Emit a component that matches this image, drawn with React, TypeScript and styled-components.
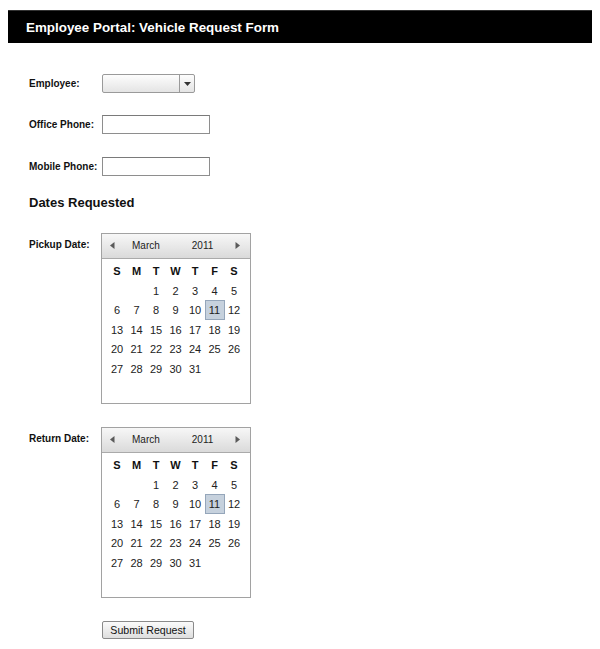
import React from "react";
import styled, { createGlobalStyle } from "styled-components";

const GlobalStyle = createGlobalStyle`
  html, body { background: #fff; }
  body {
    margin: 10px 8px 0 8px;
    font-family: "Liberation Sans", Arial, sans-serif;
    color: #111;
  }
`;

const TitleBar = styled.div`
  height: 33px;
  background: #000;
  border-top: 1px solid #333;
  box-sizing: border-box;
  color: #fff;
  font-weight: bold;
  font-size: 13.4px;
  display: flex;
  align-items: center;
  padding-left: 18px;
`;

const Form = styled.div`
  padding-left: 21px;
  display: flex;
  flex-direction: column;
`;

const Row = styled.div<{ $mt: number; $top?: boolean }>`
  display: grid;
  grid-template-columns: 73px auto;
  align-items: ${(p) => (p.$top ? "start" : "center")};
  margin-top: ${(p) => p.$mt}px;
`;

const Label = styled.div<{ $pt?: number }>`
  font-size: 10px;
  font-weight: bold;
  line-height: 12px;
  color: #111;
  padding-top: ${(p) => p.$pt ?? 0}px;
`;

const Combo = styled.div`
  width: 93px;
  height: 19px;
  box-sizing: border-box;
  border: 1px solid #9a9a9a;
  border-radius: 2px;
  background: linear-gradient(#fdfdfd, #e4e4e4);
  display: flex;
  justify-content: flex-end;
`;

const ComboButton = styled.div`
  width: 14px;
  border-left: 1px solid #9a9a9a;
  display: flex;
  align-items: center;
  justify-content: center;
`;

const TextInput = styled.input`
  width: 108px;
  height: 19px;
  box-sizing: border-box;
  border: 1px solid #8e8e8e;
  border-top-color: #7a7a7a;
  background: #fff;
  margin: 0;
  padding: 0 3px;
  font-family: inherit;
`;

const SectionTitle = styled.div`
  font-size: 13px;
  font-weight: bold;
  line-height: 16px;
  color: #111;
  margin-top: 19px;
`;

const Calendar = styled.div`
  width: 150px;
  height: 171px;
  margin-left: -1px;
  box-sizing: border-box;
  border: 1px solid #a2a2a2;
  background: #fff;
`;

const CalHeader = styled.div`
  height: 25px;
  box-sizing: border-box;
  border-bottom: 1px solid #aaa;
  background: linear-gradient(#f7f7f7, #dadada);
  display: flex;
  align-items: center;
  font-size: 10px;
  line-height: 12px;
  color: #222;
  padding: 0 0 1px 8px;
`;

const Arrow = styled.svg<{ $ml?: number }>`
  width: 5px;
  height: 7px;
  margin-left: ${(p) => p.$ml ?? 0}px;
  flex: none;
`;

const HeadText = styled.span<{ $ml: number }>`
  margin-left: ${(p) => p.$ml}px;
`;

const Grid = styled.div`
  display: grid;
  grid-template-columns: repeat(7, 19.5px);
  grid-auto-rows: 19.6px;
  padding: 2px 0 0 5px;
  font-size: 11px;
  color: #222;
`;

const Cell = styled.div<{ $bold?: boolean; $sel?: boolean }>`
  display: flex;
  align-items: center;
  justify-content: center;
  font-weight: ${(p) => (p.$bold ? "bold" : "normal")};
  color: ${(p) => (p.$bold ? "#111" : "#222")};
  box-sizing: border-box;
  width: 20px;
  height: 20px;
  ${(p) =>
    p.$sel
      ? `background: #c6d1dd; border: 1px solid #95a6ba;`
      : ``}
`;

const SubmitButton = styled.button`
  margin: 23px 0 0 73px;
  align-self: flex-start;
  width: 92px;
  height: 18px;
  box-sizing: border-box;
  border: 1px solid #8a8a8a;
  border-radius: 2px;
  background: linear-gradient(#fbfbfb, #dedede);
  font-family: "Liberation Sans", Arial, sans-serif;
  font-size: 10.6px;
  color: #111;
  padding: 0;
  line-height: 16px;
`;

const days = ["S", "M", "T", "W", "T", "F", "S"];

function MonthCalendar() {
  const cells: (number | null)[] = [null, null];
  for (let d = 1; d <= 31; d++) cells.push(d);
  return (
    <Calendar>
      <CalHeader>
        <Arrow viewBox="0 0 5 7">
          <path d="M4.5 0 L0 3.5 L4.5 7 Z" fill="#5a5a5a" />
        </Arrow>
        <HeadText $ml={17}>March</HeadText>
        <HeadText $ml={32}>2011</HeadText>
        <Arrow viewBox="0 0 5 7" $ml={22}>
          <path d="M0.5 0 L5 3.5 L0.5 7 Z" fill="#5a5a5a" />
        </Arrow>
      </CalHeader>
      <Grid>
        {days.map((d, i) => (
          <Cell key={"h" + i} $bold>
            {d}
          </Cell>
        ))}
        {cells.map((c, i) => (
          <Cell key={i} $sel={c === 11}>
            {c ?? ""}
          </Cell>
        ))}
      </Grid>
    </Calendar>
  );
}

export default function App() {
  return (
    <>
      <GlobalStyle />
      <TitleBar>Employee Portal: Vehicle Request Form</TitleBar>
      <Form>
        <Row $mt={31}>
          <Label>Employee:</Label>
          <Combo>
            <ComboButton>
              <svg width="7" height="4" viewBox="0 0 7 4">
                <path d="M0 0 L7 0 L3.5 4 Z" fill="#333" />
              </svg>
            </ComboButton>
          </Combo>
        </Row>
        <Row $mt={22}>
          <Label>Office Phone:</Label>
          <TextInput type="text" />
        </Row>
        <Row $mt={23}>
          <Label>Mobile Phone:</Label>
          <TextInput type="text" />
        </Row>
        <SectionTitle>Dates Requested</SectionTitle>
        <Row $mt={22} $top>
          <Label $pt={6}>Pickup Date:</Label>
          <MonthCalendar />
        </Row>
        <Row $mt={23} $top>
          <Label $pt={6}>Return Date:</Label>
          <MonthCalendar />
        </Row>
        <SubmitButton>Submit Request</SubmitButton>
      </Form>
    </>
  );
}
